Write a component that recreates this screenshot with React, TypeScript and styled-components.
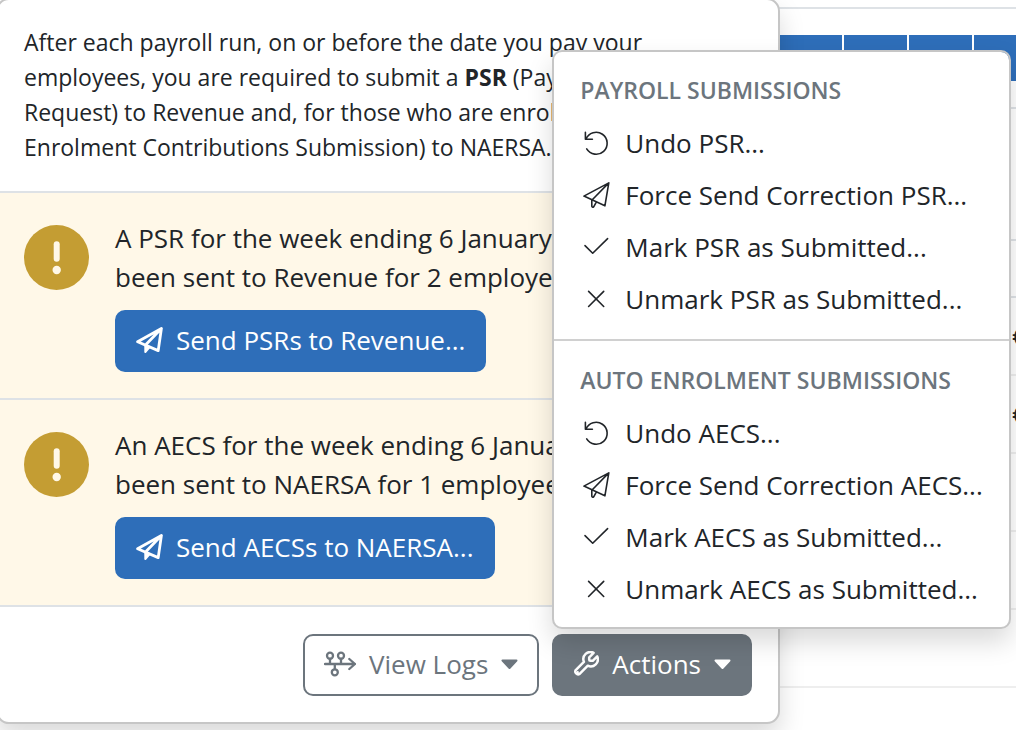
import React from "react";
import styled, { createGlobalStyle } from "styled-components";

const GlobalStyle = createGlobalStyle`
  *, *::before, *::after { box-sizing: border-box; }
  html, body, #root { height: 100%; }
  body {
    margin: 0;
    overflow: hidden;
    background: #fff;
    color: #212529;
    font-family: "Open Sans", "Noto Sans", sans-serif;
    font-size: 26px;
    line-height: 39px;
  }
`;

const Page = styled.div`
  position: relative;
  min-height: 100%;
  overflow: hidden;
`;

const TopRule = styled.div`
  height: 9px;
  border-bottom: 2px solid #dee2e6;
`;

const WeekStrip = styled.div`
  display: flex;
  gap: 2px;
  margin: 26px 0;
  padding-left: 64px;
  overflow: hidden;
`;

const Week = styled.div`
  flex: 0 0 63px;
  height: 46px;
  background: #2e6eb9;
`;

const Summary = styled.div`
  height: 134px;
  border: solid #dee2e6;
  border-width: 2px 0;
`;

const PayTable = styled.table`
  width: 100%;
  table-layout: fixed;
  border-collapse: collapse;

  th {
    height: 56px;
    padding: 0;
    border-bottom: 2px solid #dee2e6;
  }
  td {
    height: 78px;
    padding: 0;
    border-bottom: 2px solid #eee;
    font-weight: 600;
  }
  th:last-child, td:last-child { width: 4px; }
`;

const Popover = styled.section`
  position: absolute;
  top: -2px;
  left: -4px;
  right: 236px;
  border: 2px solid #c6c6c6;
  border-radius: 13px;
  background: #fff;
  box-shadow: 0 13px 26px rgba(0, 0, 0, 0.15);
`;

const Intro = styled.p`
  margin: 0;
  padding: 25px 26px 26px;
  font-size: 23px;
  line-height: 35px;
  white-space: nowrap;
`;

const Notice = styled.div`
  display: flex;
  gap: 26px;
  padding: 26px;
  border-top: 2px solid #dee2e6;
  background: #fff8e8;
`;

const NoticeIcon = styled.svg`
  flex: none;
  width: 65px;
  height: 65px;
  margin-top: 6px;
`;

const NoticeText = styled.p`
  margin: 0 0 13px;
  white-space: nowrap;
`;

const Button = styled.button<{ $kind: "primary" | "secondary" | "outline" }>`
  display: inline-flex;
  align-items: center;
  gap: 13px;
  height: 62px;
  padding: 0 19px 2px;
  border: 2px solid ${(p) => (p.$kind === "primary" ? "#2e6eb9" : "#6c757d")};
  border-radius: 10px;
  background: ${(p) =>
    p.$kind === "primary" ? "#2e6eb9" : p.$kind === "secondary" ? "#6c757d" : "#fff"};
  color: ${(p) => (p.$kind === "outline" ? "#6c757d" : "#fff")};
  font: inherit;
  white-space: nowrap;
  cursor: pointer;

  svg { flex: none; }
`;

const Footer = styled.div`
  display: flex;
  justify-content: flex-end;
  gap: 13px;
  padding: 27px 26px 26px;
  border-top: 2px solid #dee2e6;
`;

const Dropdown = styled.div`
  position: relative;
`;

const Menu = styled.div`
  position: absolute;
  bottom: calc(100% + 5px);
  left: 0;
  padding: 11px 0 12px;
  border: 2px solid #c6c6c6;
  border-radius: 10px;
  background: #fff;
  background-clip: padding-box;
  box-shadow: 0 13px 26px rgba(0, 0, 0, 0.15);
`;

const MenuHeading = styled.h6`
  margin: 0;
  padding: 10px 26px;
  color: #6c757d;
  font-size: 23px;
  font-weight: 600;
  line-height: 34px;
  white-space: nowrap;
`;

const MenuItem = styled.button`
  display: flex;
  align-items: center;
  gap: 13px;
  width: 100%;
  height: 52px;
  padding: 0 26px;
  border: 0;
  background: none;
  color: inherit;
  font: inherit;
  white-space: nowrap;
  cursor: pointer;
`;

const MenuIcon = styled.svg`
  flex: none;
  width: 32px;
  height: 26px;
  fill: none;
  stroke: currentColor;
  stroke-width: 1.6;
  stroke-linecap: round;
  stroke-linejoin: round;
`;

const Divider = styled.hr`
  margin: 14px 0 12px;
  border: 0;
  border-top: 2px solid #d0d0d0;
`;

const icons = {
  undo: "M6.7 18.9A11 11 0 1 0 6 9M5.4 2.4V9.2H12.4",
  send: "M28.8 .9L3.9 14.1L24.9 23.8ZM28.8 .9L11.8 18.2V24.3Q12.4 26 13.8 24.6L16.3 20.2",
  check: "M5 11.6L12.7 19.2L27.6 4.6",
  cross: "M8.6 5.4L23.7 20.5M23.7 5.4L8.6 20.5",
};

function Icon({ name }: { name: keyof typeof icons }) {
  return (
    <MenuIcon viewBox="0 0 32 26" overflow="visible" aria-hidden="true">
      <path d={icons[name]} />
    </MenuIcon>
  );
}

function SendIcon() {
  return (
    <svg width="27" height="27" viewBox="0 0 27 27" fill="none" stroke="currentColor" strokeWidth="2.8" strokeLinecap="round" strokeLinejoin="round" aria-hidden="true">
      <path d="M25.4 1.5L1.6 14.8L22.2 23.6ZM25.4 1.5L9.3 18.2" />
      <path d="M9.3 18.2V25L13.6 20Z" fill="currentColor" strokeWidth="2" />
    </svg>
  );
}

function Caret() {
  return (
    <svg width="17" height="11" viewBox="0 0 17 11" aria-hidden="true">
      <path d="M1.5 1.5H15.5L8.5 9Z" fill="currentColor" stroke="currentColor" strokeWidth="2" strokeLinejoin="round" />
    </svg>
  );
}

function WrenchIcon() {
  return (
    <svg width="26" height="26" viewBox="1 1 22 22" fill="none" stroke="currentColor" strokeWidth="2.1" strokeLinecap="round" strokeLinejoin="round" aria-hidden="true">
      <path d="M14.7 6.3V8.3Q14.7 9.3 15.7 9.3H17.7L21.47 5.53a6 6 0 0 1-7.94 7.94l-6.91 6.91a2.4 2.4 0 0 1-3.3-3.3l6.91-6.91a6 6 0 0 1 8.24-7.64Z" />
      <circle cx="5" cy="18.9" r=".5" strokeWidth="1" />
    </svg>
  );
}

function LogsIcon() {
  return (
    <svg width="32" height="26" viewBox="0 0 32 26" fill="none" stroke="currentColor" strokeWidth="2.3" strokeLinecap="round" strokeLinejoin="round" aria-hidden="true">
      <path d="M1 13H31M25.3 8L31 13L25.3 18M6 8V13M17 8V13M10.8 13V18" />
      <circle cx="6" cy="4.7" r="3" />
      <circle cx="17" cy="4.7" r="3" />
      <circle cx="10.8" cy="21.3" r="3" />
    </svg>
  );
}

function Warning() {
  return (
    <NoticeIcon viewBox="0 0 65 65" aria-hidden="true">
      <circle cx="32.5" cy="32.5" r="32.5" fill="#c49d33" />
      <path d="M32.7 19.3V33.7" stroke="#fff8e8" strokeWidth="6" strokeLinecap="round" />
      <circle cx="32.7" cy="45" r="4.2" fill="#fff8e8" />
    </NoticeIcon>
  );
}

function SubmissionItems({ code }: { code: string }) {
  return (
    <>
      <MenuItem role="menuitem"><Icon name="undo" />Undo {code}...</MenuItem>
      <MenuItem role="menuitem"><Icon name="send" />Force Send Correction {code}...</MenuItem>
      <MenuItem role="menuitem"><Icon name="check" />Mark {code} as Submitted...</MenuItem>
      <MenuItem role="menuitem"><Icon name="cross" />Unmark {code} as Submitted...</MenuItem>
    </>
  );
}

const weeks = Array.from({ length: 15 }, (_, i) => i);
const amounts = ["€", "€", "", "", ""];

export default function App() {
  return (
    <>
      <GlobalStyle />
      <Page>
        <TopRule />
        <WeekStrip>{weeks.map((w) => <Week key={w} />)}</WeekStrip>
        <Summary />
        <PayTable>
          <thead><tr><th /><th /></tr></thead>
          <tbody>
            {amounts.map((amount, i) => <tr key={i}><td /><td>{amount}</td></tr>)}
          </tbody>
        </PayTable>

        <Popover>
          <Intro>
            After each payroll run, on or before the date you pay your<br />
            employees, you are required to submit a <b>PSR</b> (Payroll<br />
            Request) to Revenue and, for those who are enrolled<br />
            Enrolment Contributions Submission) to NAERSA.
          </Intro>
          <Notice>
            <Warning />
            <div>
              <NoticeText>
                A PSR for the week ending 6 January has<br />
                been sent to Revenue for 2 employees.
              </NoticeText>
              <Button $kind="primary"><SendIcon />Send PSRs to Revenue...</Button>
            </div>
          </Notice>
          <Notice>
            <Warning />
            <div>
              <NoticeText>
                An AECS for the week ending 6 January has<br />
                been sent to NAERSA for 1 employee.
              </NoticeText>
              <Button $kind="primary"><SendIcon />Send AECSs to NAERSA...</Button>
            </div>
          </Notice>
          <Footer>
            <Button $kind="outline"><LogsIcon />View Logs<Caret /></Button>
            <Dropdown>
              <Button $kind="secondary" aria-haspopup="menu" aria-expanded="true"><WrenchIcon />Actions<Caret /></Button>
              <Menu role="menu">
                <MenuHeading>PAYROLL SUBMISSIONS</MenuHeading>
                <SubmissionItems code="PSR" />
                <Divider />
                <MenuHeading>AUTO ENROLMENT SUBMISSIONS</MenuHeading>
                <SubmissionItems code="AECS" />
              </Menu>
            </Dropdown>
          </Footer>
        </Popover>
      </Page>
    </>
  );
}
